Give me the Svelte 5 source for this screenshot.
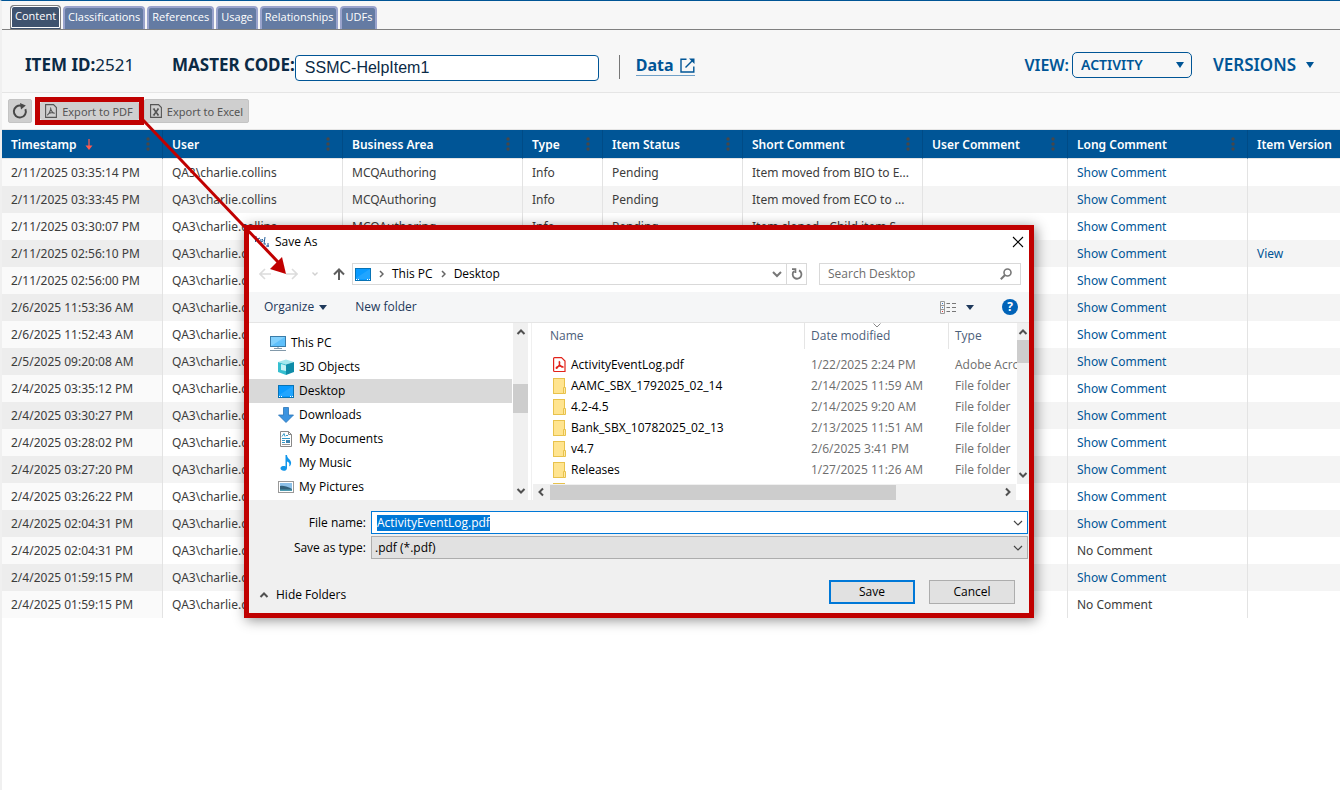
<script lang="ts">
	import { onMount } from 'svelte';

	let fileInput: HTMLInputElement;
	let masterCode = 'SSMC-HelpItem1';
	let fileName = 'ActivityEventLog.pdf';

	const tabs = ['Content', 'Classifications', 'References', 'Usage', 'Relationships', 'UDFs'];

	const columns = [
		{ label: 'Timestamp', cls: 'w-160', sorted: true },
		{ label: 'User', cls: 'w-180' },
		{ label: 'Business Area', cls: 'w-180' },
		{ label: 'Type', cls: 'w-80' },
		{ label: 'Item Status', cls: 'w-140' },
		{ label: 'Short Comment', cls: 'w-180' },
		{ label: 'User Comment', cls: 'w-145' },
		{ label: 'Long Comment', cls: 'w-180' },
		{ label: 'Item Version', cls: '' }
	];

	const events = [
		{ time: '2/11/2025 03:35:14 PM', area: 'MCQAuthoring', type: 'Info', status: 'Pending', short: 'Item moved from BIO to E...', long: true },
		{ time: '2/11/2025 03:33:45 PM', area: 'MCQAuthoring', type: 'Info', status: 'Pending', short: 'Item moved from ECO to ...', long: true },
		{ time: '2/11/2025 03:30:07 PM', area: 'MCQAuthoring', type: 'Info', status: 'Pending', short: 'Item cloned - Child item S...', long: true },
		{ time: '2/11/2025 02:56:10 PM', long: true, version: true },
		{ time: '2/11/2025 02:56:00 PM', long: true },
		{ time: '2/6/2025 11:53:36 AM', long: true },
		{ time: '2/6/2025 11:52:43 AM', long: true },
		{ time: '2/5/2025 09:20:08 AM', long: true },
		{ time: '2/4/2025 03:35:12 PM', long: true },
		{ time: '2/4/2025 03:30:27 PM', long: true },
		{ time: '2/4/2025 03:28:02 PM', long: true },
		{ time: '2/4/2025 03:27:20 PM', long: true },
		{ time: '2/4/2025 03:26:22 PM', long: true },
		{ time: '2/4/2025 02:04:31 PM', long: true },
		{ time: '2/4/2025 02:04:31 PM', long: false },
		{ time: '2/4/2025 01:59:15 PM', long: true },
		{ time: '2/4/2025 01:59:15 PM', long: false }
	];

	const places = [
		{ name: 'This PC', icon: 'pc' },
		{ name: '3D Objects', icon: 'cube' },
		{ name: 'Desktop', icon: 'desktop' },
		{ name: 'Downloads', icon: 'down' },
		{ name: 'My Documents', icon: 'doc' },
		{ name: 'My Music', icon: 'music' },
		{ name: 'My Pictures', icon: 'pic' }
	];

	const files = [
		{ name: 'ActivityEventLog.pdf', date: '1/22/2025 2:24 PM', type: 'Adobe Acrobat' },
		{ name: 'AAMC_SBX_1792025_02_14', date: '2/14/2025 11:59 AM', type: 'File folder' },
		{ name: '4.2-4.5', date: '2/14/2025 9:20 AM', type: 'File folder' },
		{ name: 'Bank_SBX_10782025_02_13', date: '2/13/2025 11:51 AM', type: 'File folder' },
		{ name: 'v4.7', date: '2/6/2025 3:41 PM', type: 'File folder' },
		{ name: 'Releases', date: '1/27/2025 11:26 AM', type: 'File folder' },
		{ name: '', date: '', type: '' }
	];

	onMount(() => {
		fileInput.focus();
		fileInput.select();
	});
</script>

{#snippet chevron(dir: string)}
	<svg class="chev {dir}" width="10" height="10" viewBox="0 0 10 10" fill="none" stroke="#505050" stroke-width="2">
		<path d="M1.5 3 L5 6.5 L8.5 3" />
	</svg>
{/snippet}

{#snippet desktopIcon()}
	<svg width="16" height="13" viewBox="0 0 16 13">
		<rect x="0.5" y="0.5" width="15" height="12" fill="#0a9bff" stroke="#0873b5" />
		<path d="M1 10 L15 1 V11 H1 Z" fill="#38b0ff" opacity="0.5" />
		<path d="M1 11.5 H2 M3 11.5 H4 M12 11.5 H13 M14 11.5 H15" stroke="#fff" />
	</svg>
{/snippet}

<div class="page">
	<nav class="tabs">
		{#each tabs as tab, i}
			<button class="tab" class:active={i === 0}>{tab}</button>
		{/each}
	</nav>

	<header class="item-header">
		<div class="item-id"><b>ITEM ID:</b><span>2521</span></div>
		<div class="master">
			<label for="master-code">MASTER CODE:</label>
			<input id="master-code" type="text" bind:value={masterCode} />
		</div>
		<div class="data-wrap">
			<a href="#data" class="data-link">
				Data
				<svg width="15" height="15" viewBox="0 0 15 15" fill="none" stroke="#005596" stroke-width="1.4">
					<path d="M6.5 1.2 H1 V14 H13.8 V8.5" />
					<path d="M5.5 9.5 L13 2" />
					<path d="M9 0.5 H14.5 V6 Z" fill="#005596" stroke="none" />
				</svg>
			</a>
		</div>
		<div class="view">
			<label for="view-mode">VIEW:</label>
			<div class="view-select">
				<select id="view-mode">
					<option>ACTIVITY</option>
				</select>
				<svg class="select-arrow" width="8" height="6" viewBox="0 0 8 6"><path d="M0 0 H8 L4 6 Z" fill="#005596" /></svg>
			</div>
		</div>
		<button class="versions">
			VERSIONS
			<svg width="8" height="6" viewBox="0 0 8 6"><path d="M0 0 H8 L4 6 Z" fill="#005596" /></svg>
		</button>
	</header>

	<div class="toolbar">
		<button class="tool refresh" aria-label="Refresh">
			<svg width="16" height="16" viewBox="0 0 16 16">
				<path d="M9.5 2.7 A6 6 0 1 0 13.4 6.2" fill="none" stroke="#484848" stroke-width="2" />
				<path d="M8 0 L13.8 2.6 L9 6.4 Z" fill="#484848" />
			</svg>
		</button>
		<div class="callout">
			<button class="tool pdf">
				<svg width="12" height="14" viewBox="0 0 12 14" fill="none" stroke="#555" stroke-width="1.1">
					<path d="M0.6 0.6 H8.5 L11.4 3.5 V13.4 H0.6 Z" />
					<path d="M5.5 3.5 C5.8 6 6.6 8.3 9.6 9.4 M5.7 5.5 C5 8 4 10 2.3 11.2 M3.6 9.4 C5.4 8.6 7.6 8.4 9.6 9.2" />
				</svg>
				Export to PDF
			</button>
		</div>
		<button class="tool excel">
			<svg width="12" height="14" viewBox="0 0 12 14" fill="none" stroke="#555" stroke-width="1.1">
				<path d="M0.6 0.6 H8.5 L11.4 3.5 V13.4 H0.6 Z" />
				<path d="M3.8 5 L8.2 11 M8.2 5 L3.8 11" stroke-width="1.6" />
				<path d="M2.8 5 H5 M7 5 H9 M2.8 11 H5 M7 11 H9" />
			</svg>
			Export to Excel
		</button>
	</div>

	<table class="grid">
		<thead>
			<tr>
				{#each columns as col, i}
					<th class={col.cls}>
						<div class="th-inner">
							<span>{col.label}</span>
							{#if col.sorted}
								<svg class="sort" width="8" height="11" viewBox="0 0 8 11"><path d="M3.4 0 H4.6 V6.5 H7.5 L4 11 L0.5 6.5 H3.4 Z" fill="#ff5a4f" /></svg>
							{/if}
							{#if i < columns.length - 1}
								<svg class="dots" width="4" height="14" viewBox="0 0 4 14" fill="#45484b">
									<circle cx="2" cy="2" r="1.7" />
									<circle cx="2" cy="7" r="1.7" />
									<circle cx="2" cy="12" r="1.7" />
								</svg>
							{/if}
						</div>
					</th>
				{/each}
			</tr>
		</thead>
		<tbody>
			{#each events as event}
				<tr>
					<td class="time">{event.time}</td>
					<td>QA3\charlie.collins</td>
					<td>{event.area ?? ''}</td>
					<td>{event.type ?? ''}</td>
					<td>{event.status ?? ''}</td>
					<td>{event.short ?? ''}</td>
					<td></td>
					<td>
						{#if event.long}
							<a href="#comment">Show Comment</a>
						{:else}
							No Comment
						{/if}
					</td>
					<td>
						{#if event.version}<a href="#version">View</a>{/if}
					</td>
				</tr>
			{/each}
		</tbody>
	</table>
</div>

<div class="dialog" role="dialog" aria-label="Save As">
	<div class="title-bar">
		<svg width="16" height="12" viewBox="0 0 16 12" fill="none" stroke="#1e5a96" stroke-width="1">
			<path d="M0 1 H3 M1.5 1 V6 M4 2 V6 M4 3 L6 2 M7 3 Q6 6 8 6 Q10 4 8 3 M11 1 L10 8 L12 8 M12 10 L15 10 M14 7 V11" />
		</svg>
		<span>Save As</span>
		<button class="close" aria-label="Close">
			<svg width="12" height="12" viewBox="0 0 12 12" stroke="#000" stroke-width="1.1"><path d="M1 1 L11 11 M11 1 L1 11" /></svg>
		</button>
	</div>

	<div class="nav-row">
		<div class="nav-arrows">
			<svg width="12" height="12" viewBox="0 0 12 12" fill="none" stroke="#dcdcdc" stroke-width="1.6"><path d="M12 6 H1 M6 1 L1 6 L6 11" /></svg>
			<svg width="12" height="12" viewBox="0 0 12 12" fill="none" stroke="#dcdcdc" stroke-width="1.6"><path d="M0 6 H11 M6 1 L11 6 L6 11" /></svg>
			<svg width="6" height="6" viewBox="0 0 6 6" fill="none" stroke="#d0d0d0" stroke-width="1.4"><path d="M0.5 1.5 L3 4 L5.5 1.5" /></svg>
			<svg width="12" height="12" viewBox="0 0 12 12" fill="none" stroke="#5e5e5e" stroke-width="2"><path d="M6 12 V1.5 M1 6.5 L6 1.5 L11 6.5" /></svg>
		</div>
		<div class="address">
			{@render desktopIcon()}
			<svg width="5" height="8" viewBox="0 0 5 8" fill="none" stroke="#666" stroke-width="1.5"><path d="M1 1 L4 4 L1 7" /></svg>
			<span>This PC</span>
			<svg width="5" height="8" viewBox="0 0 5 8" fill="none" stroke="#666" stroke-width="1.5"><path d="M1 1 L4 4 L1 7" /></svg>
			<span>Desktop</span>
			<span class="grow"></span>
			<svg width="10" height="8" viewBox="0 0 10 8" fill="none" stroke="#777" stroke-width="2"><path d="M1 2 L5 6 L9 2" /></svg>
			<button class="reload" aria-label="Refresh folder">
				<svg width="12" height="12" viewBox="0 0 12 12" fill="none" stroke="#777" stroke-width="1.8"><path d="M8 2.4 A4.4 4.4 0 1 1 3 3.2 M1 1.2 H4.4 V5" /></svg>
			</button>
		</div>
		<div class="search">
			<input type="text" placeholder="Search Desktop" aria-label="Search Desktop" />
			<svg width="12" height="12" viewBox="0 0 12 12" fill="none" stroke="#777"><circle cx="7.5" cy="4.5" r="3.5" stroke-width="1.6" /><path d="M5 7 L0.8 11.2" stroke-width="2" /></svg>
		</div>
	</div>

	<div class="commands">
		<button>Organize <svg width="8" height="5" viewBox="0 0 8 5"><path d="M0 0 H8 L4 5 Z" fill="#1e395b" /></svg></button>
		<button>New folder</button>
		<span class="grow"></span>
		<button class="views" aria-label="Change view">
			<svg width="16" height="13" viewBox="0 0 16 13" fill="none" stroke="#777">
				<path d="M0.5 0.5 H4.5 V12.5 H0.5 Z M0.5 4.5 H4.5 M0.5 8.5 H4.5" stroke="#999" />
				<path d="M6.5 2.5 H10 M12 2.5 H16 M6.5 6.5 H10 M12 6.5 H16 M6.5 10.5 H10 M12 10.5 H16" />
				<path d="M2 2.5 H3 M2 6.5 H3" stroke="#3a76c4" />
				<path d="M2 10.5 H3" stroke="#d33" />
			</svg>
			<svg width="8" height="5" viewBox="0 0 8 5"><path d="M0 0 H8 L4 5 Z" fill="#1e395b" /></svg>
		</button>
		<button class="help" aria-label="Help">?</button>
	</div>

	<div class="browser">
		<ul class="tree">
			{#each places as place, i}
				<li class:root={i === 0} class:selected={place.name === 'Desktop'}>
					<span class="place-icon">
						{#if place.icon === 'pc'}
							<svg width="16" height="15" viewBox="0 0 16 15">
								<rect x="0.5" y="0.5" width="15" height="10" fill="#5fc0fb" stroke="#3a7ca8" />
								<path d="M1 10 L15 1 H1 Z" fill="#9bdcff" opacity="0.6" />
								<path d="M8 11 V13 M4 12.5 H12 M0 14.5 H16" stroke="#8299aa" />
							</svg>
						{:else if place.icon === 'cube'}
							<svg width="16" height="16" viewBox="0 0 16 16">
								<path d="M0 3 L8 0.5 L16 3 L8 5.5 Z" fill="#a4e8ee" />
								<path d="M0 3 L8 5.5 V16 L0 13 Z" fill="#35bfd0" />
								<path d="M16 3 L8 5.5 V16 L16 13 Z" fill="#0e8ca8" />
								<path d="M3 5 L8 6.5 V12 L3 11 Z" fill="#c5f2f5" />
							</svg>
						{:else if place.icon === 'desktop'}
							{@render desktopIcon()}
						{:else if place.icon === 'down'}
							<svg width="16" height="16" viewBox="0 0 16 16"><path d="M5.5 0.5 H10.5 V8 H15.5 L8 15.5 L0.5 8 H5.5 Z" fill="#3c94e0" stroke="#2875b8" stroke-width="0.8" /></svg>
						{:else if place.icon === 'doc'}
							<svg width="16" height="16" viewBox="0 0 16 16">
								<path d="M2.5 0.5 H10.5 L13.5 3.5 V15.5 H2.5 Z" fill="#fff" stroke="#888" />
								<path d="M10.5 0.5 V3.5 H13.5" fill="none" stroke="#888" />
								<path d="M4 5.5 L6 2.5 L7 5.5 M8 4.5 H10 M4 7.5 H12 M4 9.5 H7 M4 11.5 H7" fill="none" stroke="#3298c8" />
								<rect x="8" y="9" width="4" height="3" fill="#3d83b0" />
								<path d="M4 13.5 H12" stroke="#999" />
							</svg>
						{:else if place.icon === 'music'}
							<svg width="16" height="16" viewBox="0 0 16 16">
								<path d="M7.500 0 H9 C9 4 14 4.500 13 9 C12.500 10.500 12 11 11 11.500 C12 8.500 11 7 9 6.500 V13 C9 17 2 16.500 2.500 13 C3 11 6 10.500 7.500 11.500 Z" fill="#1296ea" />
							</svg>
						{:else}
							<svg width="16" height="12" viewBox="0 0 16 12">
								<rect x="0.5" y="0.5" width="15" height="11" fill="#fff" stroke="#999" />
								<rect x="2" y="2" width="12" height="8" fill="#8cc0e8" />
								<path d="M2 5 Q6 4 14 8 V10 H2 Z" fill="#31607a" />
								<path d="M2 8.500 H14 V10 H2 Z" fill="#4d9bb0" />
							</svg>
						{/if}
					</span>
					{place.name}
				</li>
			{/each}
		</ul>
		<div class="vscroll tree-scroll">
			{@render chevron('up')}
			<div class="thumb"></div>
			{@render chevron('down')}
		</div>

		<div class="listing">
			<div class="listing-top">
				<div class="list-view">
					<table class="files">
						<thead>
							<tr>
								<th class="name-col">Name</th>
								<th class="date-col">
									Date modified
									<svg class="sort-mark" width="8" height="5" viewBox="0 0 8 5" fill="none" stroke="#888"><path d="M0.5 0.5 L4 4 L7.5 0.5" /></svg>
								</th>
								<th class="type-col">Type</th>
							</tr>
						</thead>
						<tbody>
							{#each files as file, i}
								<tr>
									<td>
										<div class="file-name">
											{#if i === 0}
												<svg width="13" height="16" viewBox="0 0 13 16" fill="none" stroke="#e2231a">
													<path d="M1.500 0.600 H8.500 L12 4 V14.500 H1.500 Q0.600 14.500 0.600 13.500 V1.500 Q0.600 0.600 1.500 0.600 Z" fill="#fff" stroke-width="1.200" />
													<path d="M6.300 4.500 C5.500 7 7.500 9 9.500 9.500 C11 10 9.500 11 8 9.300 C6 9 4.500 9.500 3.500 10.200 C2.500 11.500 4 12 5 10 C6.500 8 7.500 5 6.300 4.500 Z" stroke-width="1.200" />
												</svg>
											{:else}
												<svg width="13" height="16" viewBox="0 0 13 16">
													<rect x="0.5" y="0.5" width="11" height="15" fill="#ffe48f" stroke="#e8c24c" />
													<path d="M10.500 15.500 V9.500 H12.500 V15.500 Z" fill="#ffe9a6" stroke="#e8c24c" />
												</svg>
											{/if}
											{file.name}
										</div>
									</td>
									<td class="muted">{file.date}</td>
									<td class="muted">{file.type}</td>
								</tr>
							{/each}
						</tbody>
					</table>
				</div>
				<div class="vscroll list-scroll">
					{@render chevron('up')}
					<div class="thumb"></div>
					{@render chevron('down')}
				</div>
			</div>
			<div class="hscroll">
				{@render chevron('left')}
				<div class="hthumb"></div>
				{@render chevron('right')}
			</div>
		</div>
	</div>

	<div class="dialog-footer">
		<div class="field">
			<label for="file-name">File name:</label>
			<div class="combo">
				<input id="file-name" type="text" bind:value={fileName} bind:this={fileInput} />
				<svg width="10" height="6" viewBox="0 0 10 6" fill="none" stroke="#444" stroke-width="1.2"><path d="M1 1 L5 5 L9 1" /></svg>
			</div>
		</div>
		<div class="field">
			<label for="file-type">Save as type:</label>
			<div class="combo type">
				<select id="file-type">
					<option>.pdf (*.pdf)</option>
				</select>
				<svg width="10" height="6" viewBox="0 0 10 6" fill="none" stroke="#444" stroke-width="1.2"><path d="M1 1 L5 5 L9 1" /></svg>
			</div>
		</div>
		<div class="actions">
			<button class="hide-folders">
				{@render chevron('up')}
				Hide Folders
			</button>
			<button class="btn primary">Save</button>
			<button class="btn">Cancel</button>
		</div>
	</div>
</div>

<svg class="pointer" width="150" height="160" viewBox="0 0 150 160">
	<path d="M3 2 L138 144" stroke="#c00000" stroke-width="3" />
	<path d="M146 156 L130 151 L142 139 Z" fill="#c00000" />
</svg>

<style>
	:global(body) {
		margin: 0;
		background: #fff;
	}

	button,
	input,
	select {
		font: inherit;
		color: inherit;
		border: none;
		background: none;
		padding: 0;
		margin: 0;
		outline: none;
	}

	select {
		appearance: none;
	}

	a {
		color: #005596;
		text-decoration: none;
	}

	svg {
		flex: none;
	}

	.grow {
		flex: 1;
	}

	.page {
		min-height: 100vh;
		box-sizing: border-box;
		border-top: 1px solid #005596;
		border-left: 2px solid #f0f0f0;
		font-family: 'Noto Sans', sans-serif;
	}

	.tabs {
		display: flex;
		align-items: flex-end;
		gap: 2px;
		height: 28px;
		padding-left: 8px;
		background: #f7f7f7;
		border-bottom: 1px solid #808080;
	}

	.tab {
		height: 23px;
		box-sizing: border-box;
		padding: 0 3px 4px;
		border: 2px solid #99a3cc;
		border-bottom: none;
		border-radius: 4px 4px 0 0;
		background: #647ba3;
		color: #fff;
		font-family: 'Open Sans', sans-serif;
		font-size: 11px;
		line-height: 16px;
	}

	.tab.active {
		height: 24px;
		padding: 0 4px 4px;
		border: 1px solid #808080;
		border-bottom: none;
		outline: 1px solid #fff;
		outline-offset: -2px;
		background: #3f536f;
	}

	.item-header {
		display: flex;
		align-items: center;
		height: 54px;
		padding: 8px 26px 0 23px;
		background: #f7f7f7;
		border-bottom: 1px solid #e5e5e5;
		font-size: 16px;
		line-height: 20px;
		color: #0b2a45;
	}

	.item-id {
		width: 147px;
		font-size: 17px;
	}

	.master {
		display: flex;
		align-items: center;
	}

	.master label {
		font-size: 17px;
		font-weight: 700;
	}

	.master input {
		width: 304px;
		height: 26px;
		box-sizing: border-box;
		margin-top: 6px;
		padding: 0 9px;
		border: 1px solid #005596;
		border-radius: 4px;
		background: #fff;
		font-family: 'Liberation Sans', sans-serif;
	}

	.data-wrap {
		display: flex;
		height: 24px;
		margin: 4px auto 0 20px;
		padding-left: 16px;
		border-left: 1px solid #777;
	}

	.data-link {
		display: flex;
		align-items: center;
		gap: 6px;
		height: 20px;
		border-bottom: 1px solid #6fa0c8;
		font-weight: 700;
	}

	.view {
		display: flex;
		align-items: center;
		gap: 3px;
		color: #005596;
		font-weight: 600;
	}

	.view-select {
		display: flex;
		align-items: center;
		width: 120px;
		height: 26px;
		box-sizing: border-box;
		padding-right: 7px;
		border: 1px solid #005596;
		border-radius: 5px;
		font-size: 14px;
	}

	.view-select select {
		flex: 1;
		min-width: 0;
		padding-left: 8px;
	}

	.versions {
		display: flex;
		align-items: center;
		gap: 10px;
		margin-left: 21px;
		color: #005596;
		font-size: 17px;
		font-weight: 600;
	}

	.toolbar {
		display: flex;
		align-items: center;
		height: 36px;
		padding-left: 6px;
		background: #fafafa;
		border-bottom: 1px solid #e5e5e5;
	}

	.tool {
		display: flex;
		align-items: center;
		justify-content: center;
		gap: 5px;
		height: 24px;
		box-sizing: border-box;
		border: 1px solid #c4c4c4;
		border-radius: 2px;
		background: #cfcfcf;
		color: #555;
		font-size: 11px;
	}

	.refresh {
		width: 24px;
		margin-right: 3px;
	}

	.callout {
		border: 5px solid #c00000;
	}

	.pdf {
		width: 99px;
		height: 18px;
		border-width: 0 1px 0 0;
	}

	.excel {
		width: 105px;
	}

	.grid {
		width: 100%;
		table-layout: fixed;
		border-collapse: separate;
		border-spacing: 0;
		font-size: 12px;
		color: #3c3c3c;
	}

	.grid th {
		height: 29px;
		box-sizing: border-box;
		padding: 0 0 0 9px;
		border-left: 1px solid #004b86;
		border-bottom: 1px solid #e5e5e5;
		background: #005596;
		color: #fff;
		font-weight: 600;
		text-align: left;
		white-space: nowrap;
	}

	.th-inner {
		display: flex;
		align-items: center;
	}

	.sort {
		margin-left: 8px;
	}

	.dots {
		margin: 0 12px 0 auto;
	}

	.w-160 {
		width: 160px;
	}

	.w-180 {
		width: 180px;
	}

	.w-80 {
		width: 80px;
	}

	.w-140 {
		width: 140px;
	}

	.w-145 {
		width: 145px;
	}

	.grid td {
		height: 27px;
		box-sizing: border-box;
		padding: 0 0 0 9px;
		border-left: 1px solid #e3e3e3;
		white-space: nowrap;
		overflow: hidden;
	}

	.grid th:first-child,
	.grid td:first-child {
		border-left: none;
	}

	.grid tbody tr:nth-child(even) {
		background: #f4f4f4;
	}

	.grid .time {
		background: #fafafa;
	}

	.grid tr:nth-child(even) .time {
		background: #ededed;
	}

	/* save dialog */
	.dialog {
		position: absolute;
		top: 225px;
		left: 244px;
		width: 780px;
		border: 5px solid #c00000;
		background: #fff;
		box-shadow: 2px 2px 12px rgba(0, 0, 0, 0.45);
		color: #000;
		font-family: 'Open Sans', sans-serif;
		font-size: 12px;
		line-height: 16px;
	}

	.title-bar {
		display: flex;
		align-items: center;
		gap: 5px;
		height: 24px;
		padding: 0 5px;
	}

	.close {
		display: flex;
		margin-left: auto;
	}

	.nav-row {
		display: flex;
		align-items: center;
		padding: 9px 8px 7px 10px;
	}

	.nav-arrows {
		display: flex;
		align-items: center;
		justify-content: space-between;
		width: 86px;
		margin-right: 7px;
	}

	.address {
		display: flex;
		align-items: center;
		gap: 8px;
		flex: 1;
		height: 22px;
		box-sizing: border-box;
		padding-left: 2px;
		border: 1px solid #d9d9d9;
	}

	.address .grow {
		margin-right: -8px;
	}

	.reload {
		display: flex;
		align-items: center;
		justify-content: center;
		width: 20px;
		height: 20px;
		margin-left: -4px;
		border-left: 1px solid #d9d9d9;
	}

	.search {
		display: flex;
		align-items: center;
		width: 202px;
		height: 22px;
		box-sizing: border-box;
		margin-left: 12px;
		padding: 0 8px;
		border: 1px solid #d9d9d9;
	}

	.search input {
		flex: 1;
		min-width: 0;
	}

	.search input::placeholder {
		color: #6d6d6d;
		opacity: 1;
	}

	.commands {
		display: flex;
		align-items: center;
		gap: 28px;
		height: 30px;
		padding: 0 11px 0 15px;
		background: #f5f6f7;
		border-bottom: 1px solid #e5e5e5;
		color: #1e395b;
	}

	.commands button {
		display: flex;
		align-items: center;
		gap: 5px;
	}

	.commands .views {
		gap: 10px;
	}

	.commands .help {
		justify-content: center;
		width: 16px;
		height: 16px;
		border-radius: 50%;
		background: #0063b8;
		color: #fff;
		font-weight: 700;
	}

	.browser {
		display: flex;
		height: 177px;
	}

	.tree {
		width: 263px;
		margin: 0;
		padding: 8px 0 0;
		list-style: none;
	}

	.tree li {
		display: flex;
		align-items: center;
		gap: 5px;
		height: 24px;
		padding-left: 29px;
	}

	.tree li.root {
		padding-left: 21px;
	}

	.tree li.selected {
		background: #d9d9d9;
	}

	.place-icon {
		display: flex;
		width: 16px;
	}

	.vscroll {
		display: flex;
		flex-direction: column;
		align-items: center;
		box-sizing: border-box;
		padding: 4px 0;
		background: #f0f0f0;
	}

	.tree-scroll {
		width: 15px;
		margin: 0 1px;
	}

	.thumb {
		width: 100%;
		background: #cdcdcd;
	}

	.tree-scroll .thumb {
		height: 29px;
		margin: 47px 0 auto;
	}

	.chev.up {
		transform: rotate(180deg);
	}

	.chev.left {
		transform: rotate(90deg);
	}

	.chev.right {
		transform: rotate(-90deg);
	}

	.listing {
		flex: 1;
		min-width: 0;
		margin-left: 2px;
		border-left: 1px solid #f0f0f0;
	}

	.listing-top {
		display: flex;
		height: 161px;
	}

	.list-view {
		flex: 1;
		min-width: 0;
		overflow: hidden;
	}

	.list-scroll {
		width: 12px;
	}

	.list-scroll .thumb {
		height: 23px;
		margin: 3px 0 auto;
	}

	.files {
		width: 100%;
		table-layout: fixed;
		border-collapse: separate;
		border-spacing: 0;
	}

	.files th {
		position: relative;
		height: 26px;
		padding: 0 0 0 6px;
		border-right: 1px solid #e5e5e5;
		color: #4c607a;
		font-weight: 400;
		text-align: left;
	}

	.files th:last-child {
		border-right: none;
	}

	.files .name-col {
		width: 254px;
		padding-left: 18px;
	}

	.files .date-col {
		width: 137px;
	}

	.sort-mark {
		position: absolute;
		top: 0;
		left: 68px;
	}

	.files tbody::before {
		content: '';
		display: block;
		height: 5px;
	}

	.files td {
		height: 21px;
		padding: 0 0 0 6px;
		white-space: nowrap;
		overflow: hidden;
	}

	.files td:first-child {
		padding-left: 21px;
	}

	.file-name {
		display: flex;
		align-items: center;
		gap: 5px;
	}

	.muted {
		color: #6d6d6d;
	}

	.hscroll {
		display: flex;
		align-items: center;
		height: 16px;
		box-sizing: border-box;
		margin: 0 13px 0 1px;
		padding: 0 3px;
		background: #f0f0f0;
	}

	.hthumb {
		width: 346px;
		height: 15px;
		margin: 0 auto 0 4px;
		background: #cdcdcd;
	}

	.dialog-footer {
		padding: 11px 1px 9px 0;
		background: #f0f0f0;
	}

	.field {
		display: flex;
		align-items: center;
		margin-bottom: 2px;
	}

	.field label {
		width: 117px;
		margin-right: 5px;
		text-align: right;
	}

	.combo {
		display: flex;
		align-items: center;
		flex: 1;
		height: 23px;
		box-sizing: border-box;
		padding: 0 4px 0 5px;
		border: 1px solid #0078d7;
		background: #fff;
	}

	.combo.type {
		padding-left: 3px;
		border-color: #adadad;
		background: #e1e1e1;
	}

	.combo input,
	.combo select {
		flex: 1;
		min-width: 0;
	}

	.combo input::selection {
		background: #0078d7;
		color: #fff;
	}

	.actions {
		display: flex;
		align-items: center;
		gap: 14px;
		margin-top: 21px;
		padding: 0 13px 0 10px;
	}

	.hide-folders {
		display: flex;
		align-items: center;
		gap: 7px;
		margin-right: auto;
		padding-top: 6px;
	}

	.btn {
		width: 86px;
		height: 24px;
		box-sizing: border-box;
		border: 1px solid #adadad;
		background: #e1e1e1;
	}

	.btn.primary {
		border: 2px solid #0078d7;
	}

	.pointer {
		position: absolute;
		top: 118px;
		left: 140px;
		pointer-events: none;
	}
</style>
